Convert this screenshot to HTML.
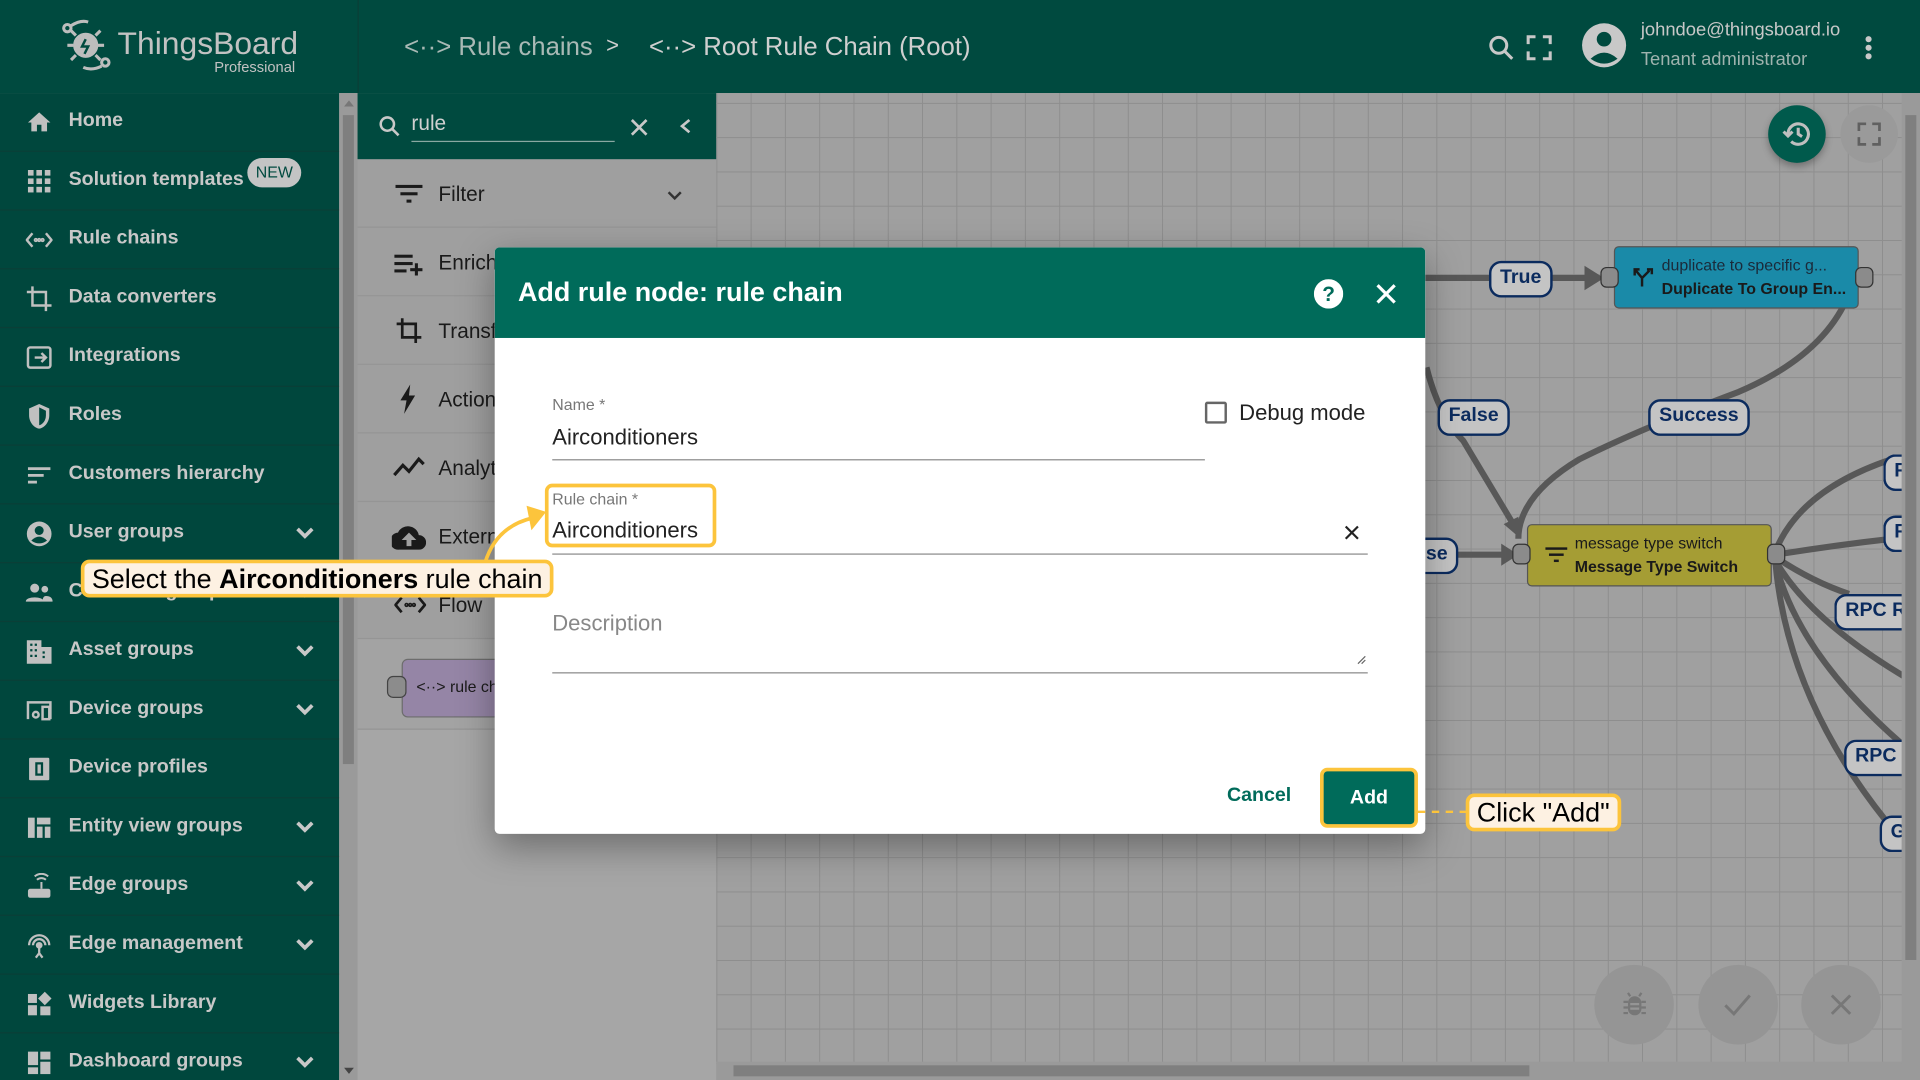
<!DOCTYPE html>
<html><head><meta charset="utf-8"><style>
*{box-sizing:border-box;margin:0;padding:0}
html,body{width:1920px;height:1080px;overflow:hidden;background:#a1a1a1}
#root{position:absolute;left:0;top:0;width:1568px;height:882px;transform:scale(1.22449);transform-origin:0 0;font-family:"Liberation Sans",Roboto,sans-serif;overflow:hidden}
.hdr{position:absolute;left:0;top:0;width:1568px;height:76px;background:#004a3f}
.side{position:absolute;left:0;top:76px;width:277px;height:806px;background:#00473d}
.item{position:absolute;left:0;width:277px;height:48px;border-bottom:1px solid #0a3f37;color:#c8c8c8;font-size:16px;font-weight:bold}
.item span{position:absolute;left:56px;top:14px}
.item .ic{position:absolute;left:21px;top:13px;width:22px;height:22px}
.item .chev{position:absolute;left:240px;top:14px;width:18px;height:18px}
.sb{position:absolute;left:277px;top:76px;width:15px;height:806px;background:#9a9a9a}
.lib{position:absolute;left:292px;top:76px;width:293px;height:806px;background:#9f9f9f}
.libitem{position:absolute;left:0;width:293px;height:56px;border-bottom:1px solid #959595;font-size:17px;color:#1a1a1a}
.canvas{position:absolute;left:585px;top:76px;width:983px;height:806px;background-color:#a0a0a0;background-image:linear-gradient(#8e8e8e 1px,transparent 1px),linear-gradient(90deg,#8e8e8e 1px,transparent 1px);background-size:28px 28px;background-position:0 8px}
.lbl{position:absolute;background:#c4c4c4;border:2px solid #0b2b5e;border-radius:10px;color:#0b2b5e;font-weight:bold;font-size:16px;padding:3px 7px;height:30px}
.dlg{position:absolute;left:404px;top:202px;width:760px;height:479px;background:#fff;border-radius:4px;box-shadow:0 10px 30px rgba(0,0,0,.35);overflow:hidden}
.dh{height:74px;background:#006b5a;color:#fff;font-size:22px;font-weight:bold;padding:24px 19px}
.flab{position:absolute;font-size:13px;color:#777}
.fval{position:absolute;font-size:18px;color:#222}
.uline{position:absolute;height:1px;background:#8a8a8a}
.call{position:absolute;background:#fdf1e2;border:3px solid #fcc43c;border-radius:7px;color:#000;font-size:22px;padding:0 6px;line-height:25px}
.fab{position:absolute;border-radius:50%}
</style></head><body><div id="root">

<div class="hdr">
 <svg style="position:absolute;left:48px;top:14px" width="46" height="46" viewBox="0 0 46 46" fill="none" stroke="#bdbdbd" stroke-width="2.5"><circle cx="7" cy="9" r="3"/><path d="M10 7 Q18 2 24 4"/><circle cx="22" cy="23" r="9" fill="#bdbdbd"/><path d="M14 15l-4-4M30 15l4-4M14 31l-4 4M30 31l4 4M12 23H7M37 23h-5"/><circle cx="38" cy="37" r="3"/><path d="M35 40 Q27 44 20 41"/><path d="M22 18l-3 6h5l-3 6" stroke="#004a3f" stroke-width="2"/></svg>
 <div style="position:absolute;left:96px;top:20px;font-size:26px;color:#c2c2c2">ThingsBoard</div>
 <div style="position:absolute;left:175px;top:48px;font-size:12px;color:#c2c2c2">Professional</div>
 <div style="position:absolute;left:292px;top:0;width:1px;height:76px;background:#0a3f37"></div>
 <div style="position:absolute;left:330px;top:27px;font-size:21px;color:#a9b9b5">&lt;··&gt; Rule chains</div>
 <div style="position:absolute;left:495px;top:27px;font-size:18px;color:#cfcfcf">&gt;</div>
 <div style="position:absolute;left:530px;top:27px;font-size:21px;color:#cfcfcf">&lt;··&gt; Root Rule Chain (Root)</div>
 <svg style="position:absolute;left:1214px;top:27px" width="24" height="24" viewBox="0 0 24 24" fill="none" stroke="#c8c8c8" stroke-width="2.5"><circle cx="10" cy="10" r="6.5"/><path d="M15 15l6 6"/></svg>
 <svg style="position:absolute;left:1246px;top:28px" width="22" height="22" viewBox="0 0 22 22" fill="none" stroke="#c8c8c8" stroke-width="2.5"><path d="M2 8V2h6M14 2h6v6M20 14v6h-6M8 20H2v-6"/></svg>
 <svg style="position:absolute;left:1291px;top:18px" width="38" height="38" viewBox="0 0 38 38"><circle cx="19" cy="19" r="18" fill="#c8c8c8"/><circle cx="19" cy="14" r="6" fill="#004a3f"/><path d="M8 30 Q19 20 30 30 Q19 38 8 30Z" fill="#004a3f"/></svg>
 <div style="position:absolute;left:1340px;top:16px;font-size:15px;color:#c8c8c8">johndoe@thingsboard.io</div>
 <div style="position:absolute;left:1340px;top:40px;font-size:15px;color:#9fb3ae">Tenant administrator</div>
 <svg style="position:absolute;left:1520px;top:28px" width="12" height="22"><circle cx="6" cy="4" r="2.5" fill="#c8c8c8"/><circle cx="6" cy="11" r="2.5" fill="#c8c8c8"/><circle cx="6" cy="18" r="2.5" fill="#c8c8c8"/></svg>
</div>

<div class="side">
 <div class="item" style="top:0"><svg class="ic" viewBox="0 0 24 24"><path fill="#c0c0c0" d="M10 20v-6h4v6h5v-8h3L12 3 2 12h3v8z"/></svg><span>Home</span></div>
 <div class="item" style="top:48px"><svg class="ic" viewBox="0 0 24 24" fill="#c0c0c0"><rect x="2" y="2" width="5" height="5"/><rect x="9.5" y="2" width="5" height="5"/><rect x="17" y="2" width="5" height="5"/><rect x="2" y="9.5" width="5" height="5"/><rect x="9.5" y="9.5" width="5" height="5"/><rect x="17" y="9.5" width="5" height="5"/><rect x="2" y="17" width="5" height="5"/><rect x="9.5" y="17" width="5" height="5"/><rect x="17" y="17" width="5" height="5"/></svg><span>Solution templates</span><div style="position:absolute;left:202px;top:5px;width:44px;height:24px;border-radius:12px;background:#c4c4c4;color:#004a3f;font-size:13px;font-weight:normal;text-align:center;line-height:24px">NEW</div></div>
 <div class="item" style="top:96px"><svg class="ic" viewBox="0 0 24 24" fill="none" stroke="#c0c0c0" stroke-width="2.2"><path d="M6 6l-5 6 5 6M18 6l5 6-5 6"/><circle cx="9" cy="12" r=".8"/><circle cx="12" cy="12" r=".8"/><circle cx="15" cy="12" r=".8"/></svg><span>Rule chains</span></div>
 <div class="item" style="top:144px"><svg class="ic" viewBox="0 0 24 24" fill="none" stroke="#c0c0c0" stroke-width="2.2"><path d="M6 1v17h17M1 6h17v17"/></svg><span>Data converters</span></div>
 <div class="item" style="top:192px"><svg class="ic" viewBox="0 0 24 24" fill="none" stroke="#c0c0c0" stroke-width="2.2"><rect x="2" y="3" width="20" height="18" rx="2"/><path d="M8 12h10M14 8l4 4-4 4"/></svg><span>Integrations</span></div>
 <div class="item" style="top:240px"><svg class="ic" viewBox="0 0 24 24"><path fill="#c0c0c0" d="M12 1L3 5v6c0 6 4 11 9 12 5-1 9-6 9-12V5z"/><path fill="#00473d" d="M12 4v16c3-1 6-4 6-9V7z"/></svg><span>Roles</span></div>
 <div class="item" style="top:288px"><svg class="ic" viewBox="0 0 24 24" fill="#c0c0c0"><rect x="2" y="5" width="20" height="2.5"/><rect x="2" y="11" width="14" height="2.5"/><rect x="2" y="17" width="8" height="2.5"/></svg><span>Customers hierarchy</span></div>
 <div class="item" style="top:336px"><svg class="ic" viewBox="0 0 24 24"><circle cx="12" cy="12" r="11" fill="#c0c0c0"/><circle cx="12" cy="9" r="4" fill="#00473d"/><path d="M5 18 Q12 11 19 18 Q12 23 5 18Z" fill="#00473d"/></svg><span>User groups</span><svg class="chev" viewBox="0 0 18 18" fill="none" stroke="#c8c8c8" stroke-width="3"><path d="M3 6l6 6 6-6"/></svg></div>
 <div class="item" style="top:384px"><svg class="ic" viewBox="0 0 24 24" fill="#c0c0c0"><circle cx="8" cy="8" r="4"/><circle cx="17" cy="9" r="3"/><path d="M0 20c0-5 16-5 16 0zM15 20c0-3 1-5 3-5 4 0 6 2 6 5z"/></svg><span>Customer groups</span><svg class="chev" viewBox="0 0 18 18" fill="none" stroke="#c8c8c8" stroke-width="3"><path d="M3 6l6 6 6-6"/></svg></div>
 <div class="item" style="top:432px"><svg class="ic" viewBox="0 0 24 24" fill="#c0c0c0"><path d="M1 2h13v6h9v15H1z"/><path fill="#00473d" d="M4 5h2v2H4zM8 5h2v2H8zM4 10h2v2H4zM8 10h2v2H8zM4 15h2v2H4zM8 15h2v2H8zM15 12h2v2h-2zM15 16h2v2h-2z"/></svg><span>Asset groups</span><svg class="chev" viewBox="0 0 18 18" fill="none" stroke="#c8c8c8" stroke-width="3"><path d="M3 6l6 6 6-6"/></svg></div>
 <div class="item" style="top:480px"><svg class="ic" viewBox="0 0 24 24" fill="none" stroke="#c0c0c0" stroke-width="2.2"><path d="M2 20V5h20v15"/><rect x="15" y="9" width="6" height="11"/><circle cx="9" cy="16" r="2.5"/></svg><span>Device groups</span><svg class="chev" viewBox="0 0 18 18" fill="none" stroke="#c8c8c8" stroke-width="3"><path d="M3 6l6 6 6-6"/></svg></div>
 <div class="item" style="top:528px"><svg class="ic" viewBox="0 0 24 24"><rect x="3" y="2" width="18" height="20" rx="1" fill="#c0c0c0"/><rect x="9.5" y="7" width="5" height="10" fill="none" stroke="#00473d" stroke-width="2"/></svg><span>Device profiles</span></div>
 <div class="item" style="top:576px"><svg class="ic" viewBox="0 0 24 24" fill="#c0c0c0"><rect x="2" y="3" width="6" height="18"/><rect x="10" y="3" width="12" height="6"/><rect x="10" y="11" width="5" height="10"/><rect x="17" y="11" width="5" height="10"/></svg><span>Entity view groups</span><svg class="chev" viewBox="0 0 18 18" fill="none" stroke="#c8c8c8" stroke-width="3"><path d="M3 6l6 6 6-6"/></svg></div>
 <div class="item" style="top:624px"><svg class="ic" viewBox="0 0 24 24"><rect x="2" y="14" width="20" height="8" rx="2" fill="#c0c0c0"/><path d="M14 14V8M10 6a6 6 0 018 0M8 3a9 9 0 0112 0" stroke="#c0c0c0" stroke-width="1.8" fill="none"/></svg><span>Edge groups</span><svg class="chev" viewBox="0 0 18 18" fill="none" stroke="#c8c8c8" stroke-width="3"><path d="M3 6l6 6 6-6"/></svg></div>
 <div class="item" style="top:672px"><svg class="ic" viewBox="0 0 24 24" fill="none" stroke="#c0c0c0" stroke-width="2"><path d="M3 12a9 9 0 0118 0M6.5 12a5.5 5.5 0 0111 0"/><circle cx="12" cy="12" r="2" fill="#c0c0c0"/><path d="M12 14v5l-3 4M12 19l3 4"/></svg><span>Edge management</span><svg class="chev" viewBox="0 0 18 18" fill="none" stroke="#c8c8c8" stroke-width="3"><path d="M3 6l6 6 6-6"/></svg></div>
 <div class="item" style="top:720px"><svg class="ic" viewBox="0 0 24 24" fill="#c0c0c0"><rect x="2" y="3" width="8" height="8"/><path d="M17 1l6 6-6 6-6-6z"/><rect x="2" y="13" width="8" height="9"/><rect x="13" y="14" width="9" height="8"/></svg><span>Widgets Library</span></div>
 <div class="item" style="top:768px"><svg class="ic" viewBox="0 0 24 24" fill="#c0c0c0"><rect x="2" y="2" width="9" height="12"/><rect x="13" y="2" width="9" height="7"/><rect x="2" y="16" width="9" height="6"/><rect x="13" y="11" width="9" height="11"/></svg><span>Dashboard groups</span><svg class="chev" viewBox="0 0 18 18" fill="none" stroke="#c8c8c8" stroke-width="3"><path d="M3 6l6 6 6-6"/></svg></div>
</div>
<div class="sb"><div style="position:absolute;left:3px;top:18px;width:9px;height:530px;background:#7f7f7f"></div><div style="position:absolute;left:4px;top:6px;border:4px solid transparent;border-bottom:5px solid #777;border-top:0"></div><div style="position:absolute;left:4px;top:796px;border:4px solid transparent;border-top:5px solid #444;border-bottom:0"></div></div>

<div class="lib">
 <div style="position:absolute;left:0;top:0;width:293px;height:54px;background:#004a3f">
  <svg style="position:absolute;left:16px;top:17px" width="20" height="20" viewBox="0 0 24 24" fill="none" stroke="#c8c8c8" stroke-width="2.5"><circle cx="10" cy="10" r="6.5"/><path d="M15 15l6 6"/></svg>
  <div style="position:absolute;left:44px;top:15px;font-size:17px;color:#d0d0d0">rule</div>
  <div style="position:absolute;left:44px;top:39px;width:166px;height:1px;background:#8aa8a2"></div>
  <svg style="position:absolute;left:222px;top:20px" width="16" height="16" viewBox="0 0 16 16" stroke="#c8c8c8" stroke-width="2.2"><path d="M2 2l12 12M14 2L2 14"/></svg>
  <svg style="position:absolute;left:262px;top:20px" width="12" height="14" viewBox="0 0 12 14" fill="none" stroke="#c8c8c8" stroke-width="2.2"><path d="M9 2L3 7l6 5"/></svg>
 </div>
 <div class="libitem" style="top:54px"><svg style="position:absolute;left:31px;top:19px" width="22" height="18" viewBox="0 0 22 18" fill="#1a1a1a"><rect x="0" y="2" width="22" height="2.5"/><rect x="4" y="8" width="14" height="2.5"/><rect x="9" y="14" width="4" height="2.5"/></svg><span style="position:absolute;left:66px;top:19px">Filter</span><svg style="position:absolute;left:252px;top:25px" width="14" height="10" fill="none" stroke="#333" stroke-width="2"><path d="M2 2l5 5 5-5"/></svg></div>
 <div class="libitem" style="top:110px"><svg style="position:absolute;left:30px;top:19px" width="24" height="20" fill="#1a1a1a"><rect x="0" y="3" width="15" height="2.5"/><rect x="0" y="9" width="15" height="2.5"/><rect x="0" y="15" width="10" height="2.5"/><rect x="13" y="14" width="10" height="2.5"/><rect x="16.8" y="10" width="2.5" height="10"/></svg><span style="position:absolute;left:66px;top:19px">Enrichment</span></div>
 <div class="libitem" style="top:166px"><svg style="position:absolute;left:31px;top:16px" width="22" height="24" viewBox="0 0 24 24" fill="none" stroke="#1a1a1a" stroke-width="2.4"><path d="M6 1v17h17M1 6h17v17"/></svg><span style="position:absolute;left:66px;top:19px">Transformation</span></div>
 <div class="libitem" style="top:222px"><svg style="position:absolute;left:34px;top:16px" width="14" height="24" viewBox="0 0 14 24" fill="#1a1a1a"><path d="M9 0L1 13h5l-2 11 9-15H8z"/></svg><span style="position:absolute;left:66px;top:19px">Action</span></div>
 <div class="libitem" style="top:278px"><svg style="position:absolute;left:29px;top:18px" width="26" height="18" fill="none" stroke="#1a1a1a" stroke-width="2.6"><path d="M1 16l7-8 5 5 8-10 4 4"/></svg><span style="position:absolute;left:66px;top:19px">Analytics</span></div>
 <div class="libitem" style="top:334px"><svg style="position:absolute;left:28px;top:19px" width="28" height="20" viewBox="0 0 28 20"><path fill="#1a1a1a" d="M22 8A9 9 0 005 6 7 7 0 006 20h16a6 6 0 000-12z"/><path fill="#a0a0a0" d="M14 6l-6 6h4v5h4v-5h4z"/></svg><span style="position:absolute;left:66px;top:19px">External</span></div>
 <div class="libitem" style="top:390px;height:56px"><svg style="position:absolute;left:30px;top:20px" width="26" height="16" viewBox="0 0 26 16" fill="none" stroke="#1a1a1a" stroke-width="2.2"><path d="M6 2L1 8l5 6M20 2l5 6-5 6"/><circle cx="10" cy="8" r=".7"/><circle cx="13" cy="8" r=".7"/><circle cx="16" cy="8" r=".7"/></svg><span style="position:absolute;left:66px;top:19px">Flow</span></div>
 <div style="position:absolute;left:0;top:446px;width:293px;height:74px;background:#a3a3a3;border-bottom:1px solid #929292"></div>
 <div style="position:absolute;left:36px;top:462px;width:140px;height:48px;background:#9585a6;border:1px solid #6d6d6d;border-radius:5px"></div>
 <div style="position:absolute;left:24px;top:476px;width:16px;height:18px;background:#8c8c8c;border:1px solid #444;border-radius:5px"></div>
 <div style="position:absolute;left:48px;top:477px;font-size:13px;color:#1a1a1a">&lt;··&gt; rule chain</div>
 <div style="position:absolute;left:0;top:520px;width:293px;height:286px;background:#a6a6a6"></div>
</div>

<div class="canvas">
 <svg style="position:absolute;left:0;top:0" width="983" height="806" viewBox="585 76 983 806" fill="none" stroke="#585858" stroke-width="5">
  <path d="M1160 227 H1300"/><path d="M1310 227 l-16 -10 v20z" fill="#585858" stroke="none"/>
  <path d="M1165 300 Q1175 340 1195 360 L1240 435"/><path d="M1242 440 l-14 -12 l12 -6z" fill="#585858" stroke="none"/>
  <path d="M1510 240 Q1490 290 1420 320 Q1340 350 1290 375 Q1240 405 1240 440"/>
  <path d="M1190 453 H1230"/><path d="M1240 453 l-14 -9 v18z" fill="#585858" stroke="none"/>
  <path d="M1450 450 Q1470 400 1545 375"/><path d="M1450 453 Q1500 445 1545 440"/>
  <path d="M1450 455 Q1480 475 1510 485"/><path d="M1450 458 Q1480 510 1568 560"/><path d="M1450 460 Q1470 540 1568 620"/><path d="M1450 460 Q1460 570 1540 670"/>
 </svg>
 <div class="lbl" style="left:631px;top:137px">True</div>
 <div class="lbl" style="left:589px;top:250px">False</div>
 <div class="lbl" style="left:761px;top:250px">Success</div>
 <div class="lbl" style="left:568px;top:363px;border-left:0;border-radius:0 10px 10px 0">lse</div>
 <div class="lbl" style="left:953px;top:295px;width:30px;border-right:0;border-radius:10px 0 0 10px">R</div>
 <div class="lbl" style="left:953px;top:345px;width:30px;border-right:0;border-radius:10px 0 0 10px">R</div>
 <div class="lbl" style="left:913px;top:409px;width:70px;border-right:0;border-radius:10px 0 0 10px">RPC R</div>
 <div class="lbl" style="left:921px;top:528px;width:62px;border-right:0;border-radius:10px 0 0 10px">RPC</div>
 <div class="lbl" style="left:950px;top:590px;width:33px;border-right:0;border-radius:10px 0 0 10px">G</div>
 <div style="position:absolute;left:733px;top:125px;width:200px;height:51px;background:#1a8aa8;border:1px solid #555;border-radius:4px"></div>
 <div style="position:absolute;left:722px;top:142px;width:15px;height:17px;background:#8b8b8b;border:1px solid #333;border-radius:5px"></div>
 <div style="position:absolute;left:930px;top:142px;width:15px;height:17px;background:#8b8b8b;border:1px solid #333;border-radius:5px"></div>
 <svg style="position:absolute;left:747px;top:140px" width="20" height="20" fill="none" stroke="#1a1a1a" stroke-width="2"><path d="M9 18v-7l-5-6M9 11l6-6M3 9V4h4M13 4h4v4"/></svg>
 <div style="position:absolute;left:772px;top:133px;font-size:13px;color:#1a2a3a">duplicate to specific g...</div>
 <div style="position:absolute;left:772px;top:152px;font-size:13px;font-weight:bold;color:#1a1a1a">Duplicate To Group En...</div>
 <div style="position:absolute;left:662px;top:352px;width:200px;height:51px;background:#a59d34;border:1px solid #555;border-radius:4px"></div>
 <div style="position:absolute;left:650px;top:368px;width:15px;height:17px;background:#8b8b8b;border:1px solid #333;border-radius:5px"></div>
 <div style="position:absolute;left:858px;top:368px;width:15px;height:17px;background:#8b8b8b;border:1px solid #333;border-radius:5px"></div>
 <svg style="position:absolute;left:677px;top:370px" width="18" height="15" fill="#1a1a1a"><rect x="0" y="1" width="18" height="2"/><rect x="3" y="6" width="12" height="2"/><rect x="7" y="11" width="4" height="2"/></svg>
 <div style="position:absolute;left:701px;top:360px;font-size:13px;color:#1a1a1a">message type switch</div>
 <div style="position:absolute;left:701px;top:379px;font-size:13px;font-weight:bold;color:#1a1a1a">Message Type Switch</div>
 <div class="fab" style="left:859px;top:10px;width:47px;height:47px;background:#005a4c;box-shadow:0 3px 6px rgba(0,0,0,.3)"><svg style="position:absolute;left:11px;top:11px" width="25" height="25" viewBox="0 0 24 24" fill="none" stroke="#bfbfbf" stroke-width="2.4"><path d="M5 12a8 8 0 1 1 2.5 5.8"/><path d="M1.5 10l3.5 3.5 3.5-3.5"/><path d="M13 7v5l3 2"/></svg></div>
 <div class="fab" style="left:918px;top:10px;width:47px;height:47px;background:#9a9a9a"><svg style="position:absolute;left:14px;top:14px" width="19" height="19" fill="none" stroke="#606060" stroke-width="2.4"><path d="M1 7V1h6M12 1h6v6M18 12v6h-6M7 18H1v-6"/></svg></div>
 <div class="fab" style="left:717px;top:712px;width:65px;height:65px;background:#959595"><svg style="position:absolute;left:22px;top:21px" width="22" height="22" viewBox="0 0 24 24" fill="#777"><path d="M8 5l-2-3M16 5l2-3" stroke="#777" stroke-width="2"/><rect x="6" y="5" width="12" height="17" rx="6"/><path d="M2 10h4M18 10h4M2 15h4M18 15h4M2 20h4M18 20h4" stroke="#777" stroke-width="2"/><path d="M8 12h8M8 16h8" stroke="#959595" stroke-width="2"/></svg></div>
 <div class="fab" style="left:802px;top:712px;width:65px;height:65px;background:#959595"><svg style="position:absolute;left:20px;top:22px" width="24" height="20" fill="none" stroke="#777" stroke-width="2.4"><path d="M2 11l7 7L22 3"/></svg></div>
 <div class="fab" style="left:886px;top:712px;width:65px;height:65px;background:#959595"><svg style="position:absolute;left:23px;top:23px" width="19" height="19" stroke="#777" stroke-width="2.4"><path d="M2 2l15 15M17 2L2 17"/></svg></div>
 <div style="position:absolute;left:968px;top:0;width:15px;height:806px;background:#9a9a9a"><div style="position:absolute;left:3px;top:18px;width:9px;height:690px;background:#7f7f7f"></div></div>
 <div style="position:absolute;left:0;top:791px;width:968px;height:15px;background:#9a9a9a"><div style="position:absolute;left:14px;top:3px;width:650px;height:9px;background:#7f7f7f"></div></div>
</div>

<div class="dlg">
 <div class="dh">Add rule node: rule chain</div>
 <svg style="position:absolute;left:669px;top:26px" width="24" height="24" viewBox="0 0 24 24"><circle cx="12" cy="12" r="12" fill="#fff"/><text x="12" y="18" text-anchor="middle" font-family="Liberation Sans" font-weight="bold" font-size="17" fill="#006b5a">?</text></svg>
 <svg style="position:absolute;left:719px;top:29px" width="18" height="18" stroke="#fff" stroke-width="2.6"><path d="M2 2l14 14M16 2L2 16"/></svg>
 <div class="flab" style="left:47px;top:121px">Name *</div>
 <div class="fval" style="left:47px;top:145px">Airconditioners</div>
 <div class="uline" style="left:47px;top:173px;width:533px"></div>
 <div style="position:absolute;left:580px;top:126px;width:18px;height:18px;border:2px solid #666;border-radius:2px"></div>
 <div style="position:absolute;left:608px;top:125px;font-size:18px;color:#222">Debug mode</div>
 <div class="flab" style="left:47px;top:198px">Rule chain *</div>
 <div class="fval" style="left:47px;top:221px">Airconditioners</div>
 <svg style="position:absolute;left:694px;top:227px" width="12" height="12" stroke="#222" stroke-width="1.8"><path d="M1 1l10 10M11 1L1 11"/></svg>
 <div class="uline" style="left:47px;top:250px;width:666px"></div>
 <div style="position:absolute;left:41px;top:193px;width:140px;height:52px;border:3px solid #fcc43c;border-radius:6px"></div>
 <div style="position:absolute;left:47px;top:297px;font-size:18px;color:#888">Description</div>
 <div class="uline" style="left:47px;top:347px;width:666px"></div>
 <svg style="position:absolute;left:704px;top:333px" width="8" height="8" stroke="#666" stroke-width="1"><path d="M1 7L7 1M4 7L7 4"/></svg>
 <div style="position:absolute;left:598px;top:439px;font-size:16px;font-weight:bold;color:#006b5a">Cancel</div>
 <div style="position:absolute;left:674px;top:425px;width:80px;height:49px;border:3px solid #fcc43c;border-radius:6px;background:#006b5a;color:#fff;font-size:16px;font-weight:bold;text-align:center;line-height:43px">Add</div>
</div>

<svg style="position:absolute;left:390px;top:405px" width="70" height="60" fill="none"><path d="M6 55 Q15 25 45 18" stroke="#fcc43c" stroke-width="3"/><path d="M56 13 L40 8 L44 28z" fill="#fcc43c"/></svg>
<div class="call" style="left:66px;top:457px">Select the <b>Airconditioners</b> rule chain</div>
<div style="position:absolute;left:1158px;top:662px;width:40px;border-top:2px dashed #fcc43c"></div>
<div class="call" style="left:1197px;top:648px">Click "Add"</div>

</div></body></html>
